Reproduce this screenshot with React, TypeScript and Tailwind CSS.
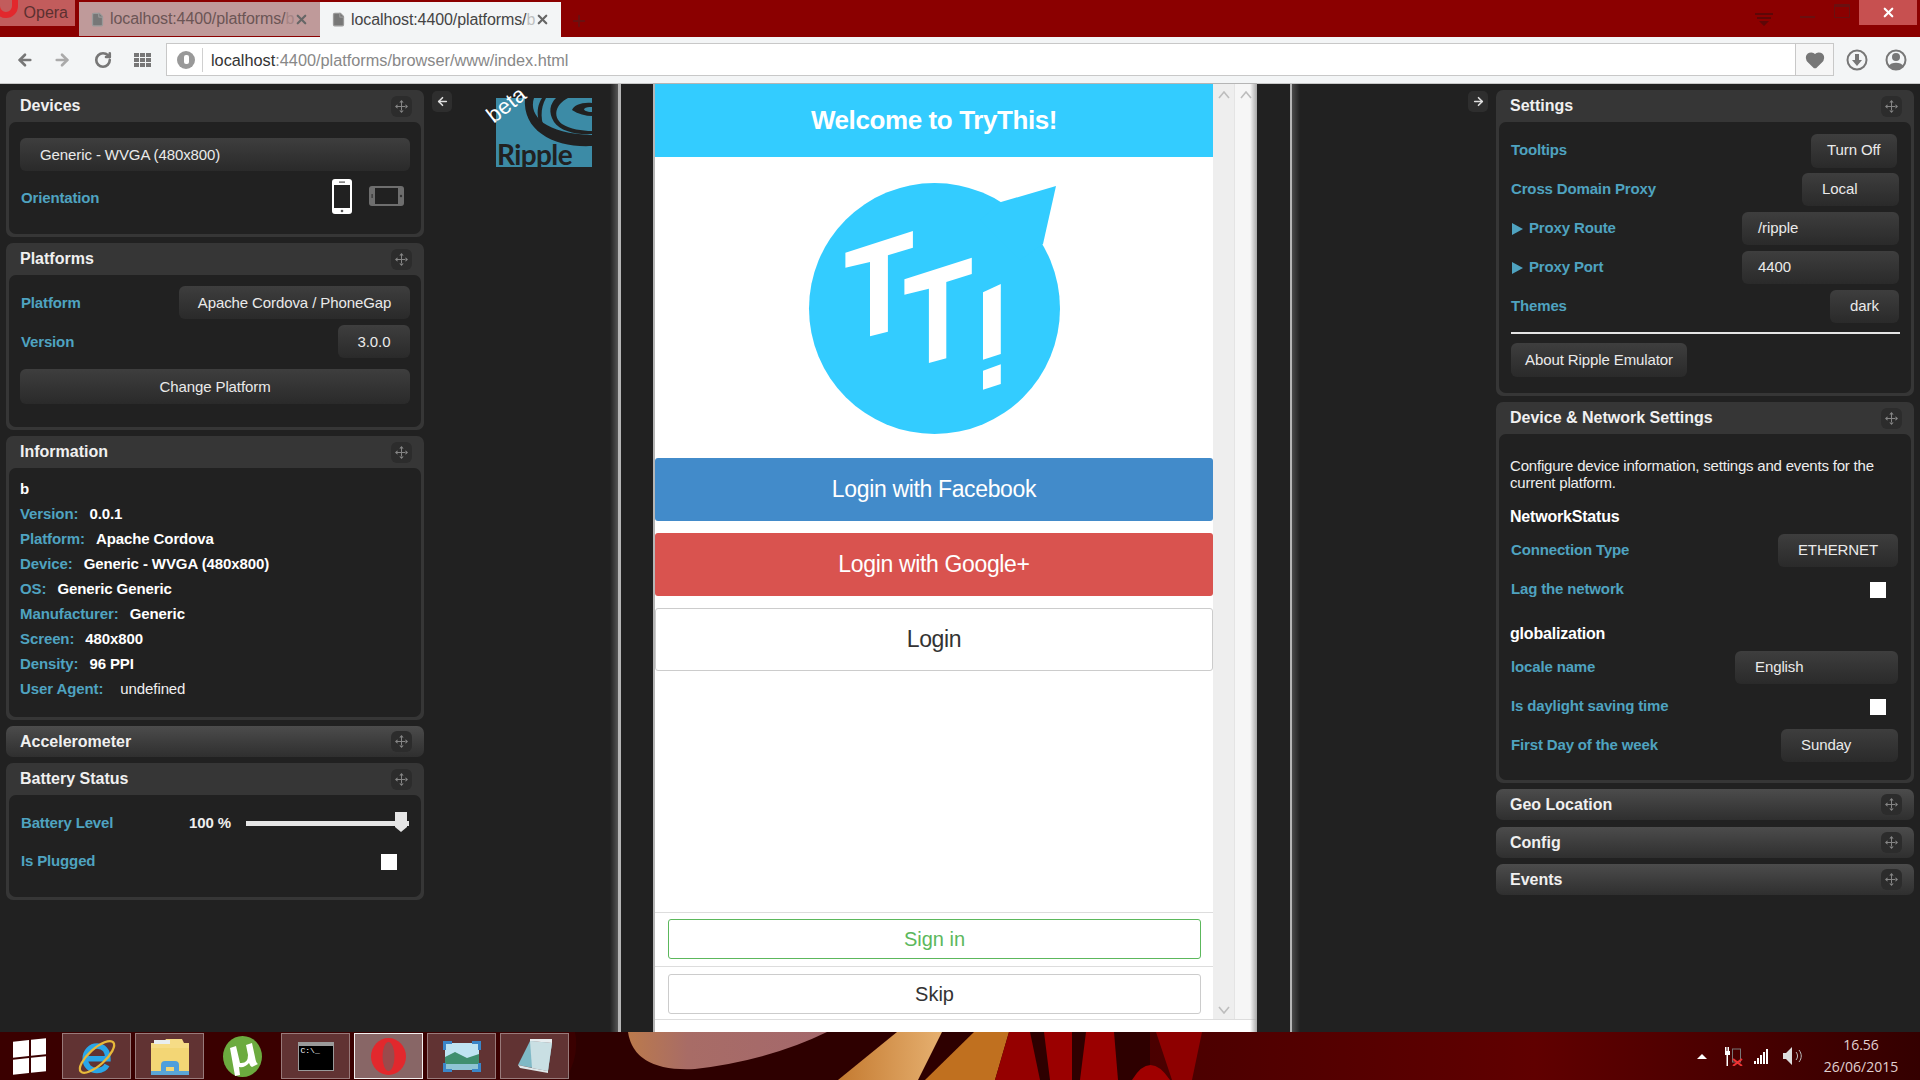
import { Heart, ArrowLeft, ArrowRight, RotateCw, X, Plus, File } from "lucide-react"
import type { ReactNode } from "react"

function MoveHandle() {
  return (
    <div className="w-[21px] h-[21px] rounded-[6px] bg-[#2c2c2c] flex items-center justify-center shrink-0">
      <svg width="13" height="13" viewBox="0 0 13 13" fill="#858585">
        <path d="M6 2h1v9H6zM2 6h9v1H2zM6.500 0l2.200 2.500H4.300zM6.500 13l2.200-2.500H4.300zM0 6.500l2.500-2.200v4.400zM13 6.500l-2.500-2.200v4.400z" />
      </svg>
    </div>
  )
}

function PanelHeader({ title, collapsed }: { title: string; collapsed?: boolean }) {
  return (
    <div
      className={`flex items-center justify-between pl-[14px] pr-[12px] ${
        collapsed ? "h-[31px] bg-gradient-to-b from-[#4c4c4c] to-[#2f2f2f]" : "h-[32px]"
      }`}
    >
      <span className="text-[16px] font-bold text-[#f0f0f0]">{title}</span>
      <MoveHandle />
    </div>
  )
}

function Panel({ title, children, bodyClass }: { title: string; children: ReactNode; bodyClass?: string }) {
  return (
    <div className="rounded-[7px] bg-[#363636] pb-[3px]">
      <PanelHeader title={title} />
      <div className={`mx-[3px] rounded-[7px] bg-[#212121] ${bodyClass ?? ""}`}>{children}</div>
    </div>
  )
}

function CollapsedPanel({ title, className }: { title: string; className?: string }) {
  return (
    <div className={`rounded-[7px] overflow-hidden ${className ?? ""}`}>
      <PanelHeader title={title} collapsed />
    </div>
  )
}

function Btn({ children, className }: { children: ReactNode; className?: string }) {
  return (
    <div
      className={`h-[33px] rounded-[6px] bg-gradient-to-b from-[#3e3e3e] to-[#2a2a2a] text-[15px] tracking-[-0.1px] text-[#eaeaea] flex items-center ${className ?? ""}`}
    >
      {children}
    </div>
  )
}

function Label({ children, className }: { children: ReactNode; className?: string }) {
  return <span className={`text-[15px] font-bold text-[#4fa3c0] tracking-[-0.15px] ${className ?? ""}`}>{children}</span>
}

function Row({ label, children }: { label: ReactNode; children: ReactNode }) {
  return (
    <div className="h-[39px] flex items-center justify-between">
      <Label>{label}</Label>
      {children}
    </div>
  )
}

function Info({ label, value, thin }: { label: string; value: string; thin?: boolean }) {
  return (
    <div className={`h-[25px] flex items-center text-[15px] tracking-[-0.1px] ${thin ? "gap-[17px]" : "gap-[11px]"}`}>
      <span className="font-bold text-[#4fa3c0]">{label}</span>
      <span className={thin ? "text-[#f0f0f0]" : "font-bold text-white"}>{value}</span>
    </div>
  )
}

function Check() {
  return <div className="w-[16px] h-[16px] bg-white mr-[13px]" />
}

function Triangle() {
  return <span className="ml-px w-0 h-0 border-y-[6px] border-y-transparent border-l-[11px] border-l-[#4fa3c0]" />
}

function PhonePortrait() {
  return (
    <svg width="20" height="35" viewBox="0 0 20 35">
      <rect width="20" height="35" rx="3" fill="#fff" />
      <rect x="2" y="6" width="16" height="23" fill="#212121" />
      <rect x="7" y="2.5" width="6" height="1.2" fill="#555" />
      <circle cx="10" cy="32" r="1.3" fill="#555" />
    </svg>
  )
}

function PhoneLandscape() {
  return (
    <svg width="35" height="20" viewBox="0 0 35 20">
      <rect width="35" height="20" rx="3" fill="#6e6e6e" />
      <rect x="6" y="2" width="23" height="16" fill="#212121" />
      <rect x="2.5" y="8" width="1.2" height="4" fill="#333" />
      <circle cx="32" cy="10" r="1.2" fill="#333" />
    </svg>
  )
}

function LeftColumn() {
  return (
    <div className="w-[418px] shrink-0 ml-[6px] flex flex-col gap-[6px] pt-[6px]">
      <Panel title="Devices" bodyClass="px-[11px] pt-[16px] h-[112px]">
        <Btn className="pl-[20px] pt-[1px]">Generic - WVGA (480x800)</Btn>
        <div className="flex items-center justify-between h-[54px]">
          <Label className="pl-[1px]">Orientation</Label>
          <div className="flex items-center gap-[17px] pr-[6px] -mt-[4px]">
            <PhonePortrait />
            <PhoneLandscape />
          </div>
        </div>
      </Panel>
      <Panel title="Platforms" bodyClass="px-[11px] pt-[11px] h-[152px]">
        <div className="flex items-center justify-between h-[33px]">
          <Label className="pl-[1px] pt-[1px]">Platform</Label>
          <Btn className="w-[231px] justify-center pt-[1px]">Apache Cordova / PhoneGap</Btn>
        </div>
        <div className="flex items-center justify-between h-[33px] mt-[6px]">
          <Label className="pl-[1px] pt-[1px]">Version</Label>
          <Btn className="w-[72px] justify-center pt-[1px]">3.0.0</Btn>
        </div>
        <Btn className="justify-center h-[35px] mt-[11px] pt-[1px]">Change Platform</Btn>
      </Panel>
      <Panel title="Information" bodyClass="px-[11px] pt-[9px] h-[249px]">
        <div className="h-[25px] flex items-center text-[15px] font-bold text-white">b</div>
        <Info label="Version:" value="0.0.1" />
        <Info label="Platform:" value="Apache Cordova" />
        <Info label="Device:" value="Generic - WVGA (480x800)" />
        <Info label="OS:" value="Generic Generic" />
        <Info label="Manufacturer:" value="Generic" />
        <Info label="Screen:" value="480x800" />
        <Info label="Density:" value="96 PPI" />
        <Info label="User Agent:" value="undefined" thin />
      </Panel>
      <CollapsedPanel title="Accelerometer" />
      <Panel title="Battery Status" bodyClass="px-[11px] pt-[9px] h-[102px]">
        <div className="h-[39px] flex items-center">
          <Label className="w-[169px] pl-[1px]">Battery Level</Label>
          <span className="w-[57px] text-[15px] font-bold text-[#eeeeee] tracking-[-0.1px]">100 %</span>
          <div className="relative w-[163px] h-[5px] -mt-[1px] bg-[#e6e6e6]">
            <div className="absolute right-[2px] -top-[9px] w-[12px] h-[15px] bg-[#e6e6e6]" />
            <div className="absolute right-[2px] top-[6px] w-0 h-0 border-x-[6px] border-x-transparent border-t-[5px] border-t-[#e6e6e6]" />
          </div>
        </div>
        <div className="h-[39px] flex items-center justify-between -mt-[1px]">
          <Label className="pl-[1px]">Is Plugged</Label>
          <Check />
        </div>
      </Panel>
    </div>
  )
}

function RightColumn() {
  return (
    <div className="w-[418px] shrink-0 mr-[6px] flex flex-col gap-[6px] pt-[6px]">
      <Panel title="Settings" bodyClass="px-[12px] pt-[9px] h-[271px]">
        <Row label="Tooltips">
          <Btn className="w-[86px] h-[34px] pl-[16px] mr-[2px]">Turn Off</Btn>
        </Row>
        <Row label="Cross Domain Proxy">
          <Btn className="w-[97px] h-[32px] pl-[20px]">Local</Btn>
        </Row>
        <Row label={<span className="flex items-center gap-[6px]"><Triangle />Proxy Route</span>}>
          <Btn className="w-[157px] h-[30px] pl-[16px]">/ripple</Btn>
        </Row>
        <Row label={<span className="flex items-center gap-[6px]"><Triangle />Proxy Port</span>}>
          <Btn className="w-[157px] h-[30px] pl-[16px]">4400</Btn>
        </Row>
        <Row label="Themes">
          <Btn className="w-[69px] pl-[20px]">dark</Btn>
        </Row>
        <div className="h-[2px] bg-[#e4e4e4] mt-[6px] -mr-[1px]" />
        <Btn className="w-[176px] h-[34px] justify-center mt-[9px]">About Ripple Emulator</Btn>
      </Panel>
      <Panel title="Device & Network Settings" bodyClass="px-[12px] pt-[23px] h-[346px]">
        <p className="-ml-px text-[15px] leading-[17px] text-[#eeeeee] tracking-[-0.2px]">
          Configure device information, settings and events for the current platform.
        </p>
        <h4 className="-ml-px text-[16px] font-bold text-white tracking-[-0.2px] mt-[17px] leading-[18px]">NetworkStatus</h4>
        <div className="mt-[5px]">
          <Row label="Connection Type">
            <Btn className="w-[120px] justify-center mr-[1px]">ETHERNET</Btn>
          </Row>
          <Row label="Lag the network">
            <Check />
          </Row>
        </div>
        <h4 className="-ml-px text-[16px] font-bold text-white tracking-[-0.2px] mt-[16px] leading-[18px]">globalization</h4>
        <div className="mt-[5px]">
          <Row label="locale name">
            <Btn className="w-[163px] pl-[20px] mr-[1px]">English</Btn>
          </Row>
          <Row label="Is daylight saving time">
            <Check />
          </Row>
          <Row label="First Day of the week">
            <Btn className="w-[117px] pl-[20px] mr-[1px]">Sunday</Btn>
          </Row>
        </div>
      </Panel>
      <CollapsedPanel title="Geo Location" />
      <CollapsedPanel title="Config" className="mt-[1px]" />
      <CollapsedPanel title="Events" />
    </div>
  )
}

function TryThisLogo() {
  return (
    <svg width="270" height="260" viewBox="800 180 270 260" className="block">
      <circle cx="934.500" cy="308.500" r="125.500" fill="#33ccff" />
      <path d="M1001 202L1056 186L1043 244L1020 260L980 220Z" fill="#33ccff" />
      <g fill="#fff">
        <path d="M845.400 252.700L912.900 231V247.700L887.900 255.300V331.700L870 336.300V262L845.400 267.700Z" />
        <path d="M904.400 279.300L971.800 257.700V274L946.300 282V358.300L928.900 363V288.700L904.400 294.700Z" />
        <path d="M983 292.300L1000.800 284V354L983 359.700Z" />
        <path d="M983 370.700L1000.800 364.300V384L983 389.700Z" />
      </g>
    </svg>
  )
}

function PhoneButton({ children, className }: { children: ReactNode; className?: string }) {
  return (
    <div className={`h-[63px] rounded-[3px] flex items-center justify-center text-[23px] tracking-[-0.35px] ${className ?? ""}`}>
      {children}
    </div>
  )
}

function ScrollArrow({ down }: { down?: boolean }) {
  return (
    <svg width="12" height="8" viewBox="0 0 12 8" fill="none" stroke="#bdbdbd" strokeWidth="1.6">
      <path d={down ? "M1 1l5 6 5-6" : "M1 7l5-6 5 6"} />
    </svg>
  )
}

function Phone() {
  return (
    <div className="relative w-[604px] -mt-px ml-[32px] flex flex-col border-l-[2px] border-t border-[#b5b5b5] bg-white overflow-hidden">
      <div className="flex-1 flex min-h-0">
        <div className="w-[558px] flex flex-col bg-white text-[#222]">
          <div className="h-[73px] shrink-0 bg-[#33ccff] flex items-center justify-center text-[26px] font-bold text-white tracking-[-0.4px]">
            Welcome to TryThis!
          </div>
          <div className="h-[301px] shrink-0 pt-[23px] pl-[145px]">
            <TryThisLogo />
          </div>
          <div className="flex flex-col gap-[12px]">
            <PhoneButton className="bg-[#428bca] text-white">Login with Facebook</PhoneButton>
            <PhoneButton className="bg-[#d9534f] text-white">Login with Google+</PhoneButton>
            <PhoneButton className="border border-[#cccccc] text-[#333]">Login</PhoneButton>
          </div>
          <div className="flex-1" />
          <div className="border-t border-[#dddddd] pt-[6px] pb-[6px] pl-[13px] pr-[12px] h-[54px]">
            <div className="h-[40px] rounded-[3px] border border-[#5cb85c] text-[#5cb85c] text-[20px] flex items-center justify-center">
              Sign in
            </div>
          </div>
          <div className="border-t border-[#dddddd] pt-[7px] pl-[13px] pr-[12px] h-[53px]">
            <div className="h-[40px] rounded-[3px] border border-[#cccccc] text-[#333] text-[20px] flex items-center justify-center">
              Skip
            </div>
          </div>
        </div>
        <div className="w-[21px] bg-[#eeeeee] flex flex-col items-center justify-between pt-[7px] pb-[5px]">
          <ScrollArrow />
          <ScrollArrow down />
        </div>
        <div className="w-[23px] flex justify-center pt-[7px] bg-[#f6f6f6] border-l border-[#e4e4e4]">
          <ScrollArrow />
        </div>
      </div>
      <div className="h-[13px] shrink-0 bg-white border-t border-[#dddddd]" />
      <div className="absolute right-0 top-0 bottom-0 w-[7px] bg-gradient-to-r from-transparent to-[#a8a8a8]" />
    </div>
  )
}

function RippleLogo() {
  return (
    <div className="relative w-[96px] h-[69px] mt-[14px] ml-[44px] bg-[#3c8ba6]">
      <svg width="96" height="69" viewBox="0 0 96 69" className="absolute inset-0">
        <path d="M46 0H50C44 10 44 24 51 36C42 28 38 12 46 0Z" fill="#212121" />
        <path d="M60 0H72C60 6 56 18 66 26C74 31 86 33 96 33V36C80 37 64 33 58 24C52 14 54 6 60 0Z" fill="#212121" />
        <path d="M96 5C86 4 78 7 76 12C82 16 90 18 96 18V14C90 14 88 12 88 11C90 9 93 9 96 9Z" fill="#212121" />
        <path d="M29 0H38C32 18 50 36 96 37V48C60 50 26 34 29 0Z" fill="#212121" />
      </svg>
      <span className="absolute left-[1px] bottom-[-3px] text-[28px] font-bold text-[#212121] tracking-[-0.6px] leading-[32px] font-['Lato',sans-serif]">
        Ripple
      </span>
      <span className="absolute -left-[11px] -top-[4px] -rotate-[38deg] text-[22px] text-white leading-[22px]">beta</span>
    </div>
  )
}

function CollapseBtn({ right }: { right?: boolean }) {
  return (
    <div className="w-[20px] h-[21px] rounded-[5px] bg-[#2e2e2e] flex items-center justify-center">
      {right ? <ArrowRight size={13} strokeWidth={3} color="#e0e0e0" /> : <ArrowLeft size={13} strokeWidth={3} color="#e0e0e0" />}
    </div>
  )
}

function Tab({ active }: { active?: boolean }) {
  return (
    <div
      className={`w-[241px] flex items-center pl-[11px] text-[16px] tracking-[-0.1px] ${
        active ? "h-[35px] bg-[#f3f5f6] text-[#444]" : "h-[34px] bg-[#bf9a9a] text-[#6b5555]"
      }`}
    >
      <File size={15} fill="#777" stroke="#999" className="shrink-0" />
      <span className="ml-[5px] w-[178px] whitespace-nowrap">
        localhost:4400/platforms/<span className="opacity-30">b</span>
      </span>
      <X size={15} strokeWidth={3.5} color="#666" className="ml-[6px] shrink-0" />
    </div>
  )
}

function Chrome() {
  return (
    <>
      <div className="h-[37px] bg-[#8b0000] flex items-start shrink-0">
        <div className="relative w-[75px] h-[26px] bg-[#c25c5c] text-[#5c3030] text-[16px] flex items-center justify-end pr-[7px] shrink-0 overflow-hidden">
          <div className="absolute -left-[6px] -top-[12px] w-[24px] h-[30px] rounded-full border-[6px] border-[#e2282d]" />
          Opera
        </div>
        <div className="flex items-start mt-[2px] ml-[4px]">
          <Tab />
          <Tab active />
        </div>
        <Plus size={18} strokeWidth={2.5} color="#6a1010" className="ml-[9px] mt-[12px]" />
        <div className="ml-auto flex items-start">
          <svg width="18" height="13" viewBox="0 0 18 13" className="mt-[13px] mr-[27px]" fill="#5d0707">
            <path d="M0 0H18V2H0zM2 4H16V6H2zM4 8H14L9 13z" />
          </svg>
          <div className="w-[15px] h-[2px] bg-[#6a1010] mt-[16px] mr-[19px]" />
          <div className="w-[16px] h-[14px] border border-[#6a1010] border-t-[3px] rounded-[1px] mt-[4px] mr-[9px]" />
          <div className="w-[58px] h-[25px] bg-[#c75050] flex items-center justify-center mr-[3px]">
            <X size={15} strokeWidth={3.5} color="#fff" />
          </div>
        </div>
      </div>
      <div className="h-[47px] bg-[#f3f5f6] border-b border-[#c8c8c8] flex items-center shrink-0 pb-[1px]">
        <ArrowLeft size={18} strokeWidth={3.5} color="#777" className="ml-[16px]" />
        <ArrowRight size={18} strokeWidth={3.5} color="#aaa" className="ml-[19px]" />
        <RotateCw size={18} strokeWidth={3.5} color="#777" className="ml-[23px]" />
        <div className="ml-[22px] grid grid-cols-3 gap-[1px] w-[17px] h-[14px]">
          {Array.from({ length: 9 }).map((_, i) => (
            <div key={i} className="bg-[#777]" />
          ))}
        </div>
        <div className="ml-[15px] w-[1668px] h-[33px] bg-white border border-[#c8c8c8] flex items-center">
          <div className="ml-[10px] w-[18px] h-[18px] rounded-full bg-[#999] flex items-center justify-center">
            <div className="w-[5px] h-[9px] rounded-[2px] bg-white" />
          </div>
          <div className="ml-[7px] w-px h-[24px] bg-[#d0d0d0]" />
          <span className="ml-[8px] pt-[1px] text-[16.300px] text-[#333]">
            localhost<span className="text-[#888]">:4400/platforms/browser/www/index.html</span>
          </span>
          <div className="ml-auto w-[38px] h-full border-l border-[#c8c8c8] bg-[#f6f6f6] flex items-center justify-center">
            <Heart size={20} fill="#777" stroke="#777" />
          </div>
        </div>
        <svg width="22" height="22" viewBox="0 0 22 22" className="ml-[12px]" fill="none">
          <circle cx="11" cy="11" r="9.500" stroke="#777" strokeWidth="2" />
          <path d="M9 5h4v6h3l-5 6-5-6h3z" fill="#777" />
        </svg>
        <svg width="22" height="22" viewBox="0 0 22 22" className="ml-[17px]" fill="none">
          <circle cx="11" cy="11" r="9.500" stroke="#777" strokeWidth="2" />
          <circle cx="11" cy="8" r="4" fill="#777" />
          <path d="M3.500 17C6 12.500 16 12.500 18.500 17L11 21z" fill="#777" />
        </svg>
      </div>
    </>
  )
}

function TaskItem({ children, active, plain }: { children: ReactNode; active?: boolean; plain?: boolean }) {
  return (
    <div
      className={`w-[69px] h-[46px] flex items-center justify-center ${
        plain ? "" : active ? "border border-white/90 bg-white/40" : "border border-white/35 bg-white/20"
      }`}
    >
      {children}
    </div>
  )
}

function IEIcon() {
  return (
    <svg width="40" height="42" viewBox="0 0 44 44" fill="none">
      <path d="M10 25h24c0-9-5-14-12-14s-13 6-13 14 6 13 13 13c5 0 9-2 11-6" stroke="#2aa6e8" strokeWidth="6" />
      <ellipse cx="22" cy="23" rx="24" ry="9" transform="rotate(-42 22 23)" stroke="#e8b93a" strokeWidth="2.500" />
    </svg>
  )
}

function FolderIcon() {
  return (
    <svg width="40" height="37" viewBox="0 0 40 37">
      <path d="M1 5h12l3-4h16l2 4h5v32H1Z" fill="#f6dc86" />
      <rect x="4" y="2" width="16" height="4" fill="#e9eef0" />
      <rect x="1" y="10" width="38" height="27" fill="#f3d675" />
      <path d="M11 37V27q0-4 4-4h10q4 0 4 4v10h-5v-8h-8v8Z" fill="#4f9fdc" />
      <rect x="1" y="33" width="38" height="4" fill="#5aa5d6" />
    </svg>
  )
}

function TorrentIcon() {
  return (
    <svg width="39" height="41" viewBox="0 0 39 41">
      <ellipse cx="19.500" cy="20.500" rx="19.500" ry="20.500" fill="#6cab3f" />
      <path d="M7 12l6-2 4 17q8 1 8-8l-2-10 6-2 3 14q1 6 3 7l-6 3q-2-1-3-4-4 5-10 4l1 8-5 1Z" fill="#fff" />
    </svg>
  )
}

function CmdIcon() {
  return (
    <div className="w-[36px] h-[29px] bg-black border border-[#9a9a9a] border-t-[4px] text-[8px] leading-[10px] text-white font-['Liberation_Mono',monospace] pl-[2px]">
      C:\_
    </div>
  )
}

function OperaIcon() {
  return (
    <svg width="35" height="37" viewBox="0 0 35 37">
      <ellipse cx="17.500" cy="18.500" rx="17.500" ry="18.500" fill="#e2282d" />
      <ellipse cx="17.500" cy="18.500" rx="6" ry="14.500" fill="#9a4a4c" />
    </svg>
  )
}

function PhotosIcon() {
  return (
    <svg width="38" height="31" viewBox="0 0 38 31">
      <rect x="2" y="2" width="34" height="27" fill="#bfe4f2" />
      <path d="M2 16L12 11 24 17 36 13V29H2Z" fill="#3f8f6f" />
      <path d="M2 23H36V29H2Z" fill="#8fc4d4" />
      <path d="M0 0H9V3H3V9H0ZM38 0V9H35V3H29V0ZM0 31V22H3V28H9V31ZM38 31H29V28H35V22H38Z" fill="#3a86c8" />
    </svg>
  )
}

function NotepadIcon() {
  return (
    <svg width="34" height="34" viewBox="0 0 34 34">
      <path d="M12 2L34 4 30 32 0 26Z" fill="#7fb9c6" />
      <path d="M12 2L34 4 30 32 14 29Z" fill="#c9dfe3" />
      <path d="M12 0H34V4L12 2Z" fill="#e8eef0" />
      <path d="M0 26L14 29 30 32 30 34 2 29Z" fill="#dfe7e9" />
    </svg>
  )
}

function Wallpaper() {
  return (
    <svg className="absolute inset-0" width="1920" height="48" viewBox="0 1032 1920 48">
      <defs>
        <linearGradient id="blob" x1="0" x2="1" y1="0" y2="0">
          <stop offset="0" stopColor="#bb7a4c" />
          <stop offset="0.3" stopColor="#a86c66" />
          <stop offset="1" stopColor="#a4686c" />
        </linearGradient>
        <linearGradient id="streak" x1="0" x2="1" y1="0" y2="0">
          <stop offset="0" stopColor="#c47a30" />
          <stop offset="1" stopColor="#e6b070" />
        </linearGradient>
        <linearGradient id="rest" x1="0" x2="1" y1="0" y2="0">
          <stop offset="0" stopColor="#4a0000" />
          <stop offset="0.5" stopColor="#600000" />
          <stop offset="1" stopColor="#340000" />
        </linearGradient>
      </defs>
      <rect x="1150" y="1032" width="770" height="48" fill="url(#rest)" />
      <path d="M565 1080Q580 1056 575 1032H0V1080Z" fill="#3a0000" />
      <path d="M628 1032Q634 1072 695 1069Q770 1060 827 1032Z" fill="url(#blob)" />
      <path d="M897 1032H942L918 1080H838Z" fill="url(#streak)" />
      <path d="M974 1032H1009L995 1080H925Z" fill="#c0701f" />
      <path d="M1009 1032H1030L1040 1080H995Z" fill="#950000" />
      <path d="M1044 1032H1072V1080H1050Z" fill="#9b0000" />
      <path d="M1086 1032H1114L1118 1080H1080Z" fill="#9b0000" />
      <path d="M1132 1080Q1150 1050 1170 1080Z" fill="#a00000" />
      <path d="M1156 1032H1202L1192 1080H1172Z" fill="#8e0000" />
    </svg>
  )
}

function Taskbar() {
  return (
    <div className="h-[48px] shrink-0 relative overflow-hidden bg-[#2e0000] flex items-center">
      <Wallpaper />
      <div className="relative ml-[13px] grid grid-cols-2 gap-[2px] w-[33px] h-[33px] -skew-y-[6deg]">
        <div className="bg-white" />
        <div className="bg-white" />
        <div className="bg-white" />
        <div className="bg-white" />
      </div>
      <div className="relative flex items-center gap-[4px] ml-[16px]">
        <TaskItem><IEIcon /></TaskItem>
        <TaskItem><FolderIcon /></TaskItem>
        <TaskItem plain><TorrentIcon /></TaskItem>
        <TaskItem><CmdIcon /></TaskItem>
        <TaskItem active><OperaIcon /></TaskItem>
        <TaskItem><PhotosIcon /></TaskItem>
        <TaskItem><NotepadIcon /></TaskItem>
      </div>
      <div className="relative ml-auto flex items-center pr-[19px]">
        <div className="w-0 h-0 border-x-[5px] border-x-transparent border-b-[5px] border-b-white" />
        <svg width="19" height="19" viewBox="0 0 19 19" className="ml-[17px]">
          <path d="M1 0h1.500V4h1V0H5V4h1V8H4V19H2.500V8H1Z" fill="#fff" />
          <rect x="8.500" y="2" width="8" height="13" fill="none" stroke="#777" />
          <path d="M9 12L18 19M18 12L9 19" stroke="#e33" strokeWidth="2" />
        </svg>
        <svg width="14" height="15" viewBox="0 0 14 15" className="ml-[11px]" fill="#fff">
          <path d="M0 12h2v3H0zM3 9h2v6H3zM6 6h2v9H6zM9 3h2v12H9zM12 0h2v15h-2z" />
        </svg>
        <svg width="19" height="18" viewBox="0 0 19 18" className="ml-[15px]" fill="none">
          <path d="M0 6H3L9 0V18L3 12H0Z" fill="#ddd" />
          <path d="M13 5C15 7.500 15 10.500 13 13M16 3C19 7 19 11 16 15" stroke="#bbb" />
        </svg>
        <div className="ml-[19px] w-[80px] text-center text-[14px] leading-[22px] text-[#e0d0d0] font-['Open_Sans',sans-serif]">
          <div>16.56</div>
          <div>26/06/2015</div>
        </div>
      </div>
    </div>
  )
}

export default function App() {
  return (
    <div className="w-[1920px] h-[1080px] overflow-hidden flex flex-col bg-[#212121] font-['Liberation_Sans',Arial,sans-serif]">
      <Chrome />
      <div className="flex-1 flex min-h-0 bg-[#212121]">
        <div className="w-[621px] shrink-0 flex border-r-[3px] border-[#b5b5b5] relative">
          <LeftColumn />
          <div className="ml-[8px] mt-[7px]">
            <CollapseBtn />
          </div>
          <RippleLogo />
          <div className="absolute right-0 top-0 bottom-0 w-[8px] bg-gradient-to-r from-transparent to-[#555]" />
        </div>
        <Phone />
        <div className="ml-[33px] flex-1 flex justify-end border-l-[2px] border-[#b5b5b5] relative">
          <div className="absolute left-0 top-0 bottom-0 w-[8px] bg-gradient-to-l from-transparent to-[#4a4a4a]" />
          <div className="mt-[7px] mr-[8px]">
            <CollapseBtn right />
          </div>
          <RightColumn />
        </div>
      </div>
      <Taskbar />
    </div>
  )
}
